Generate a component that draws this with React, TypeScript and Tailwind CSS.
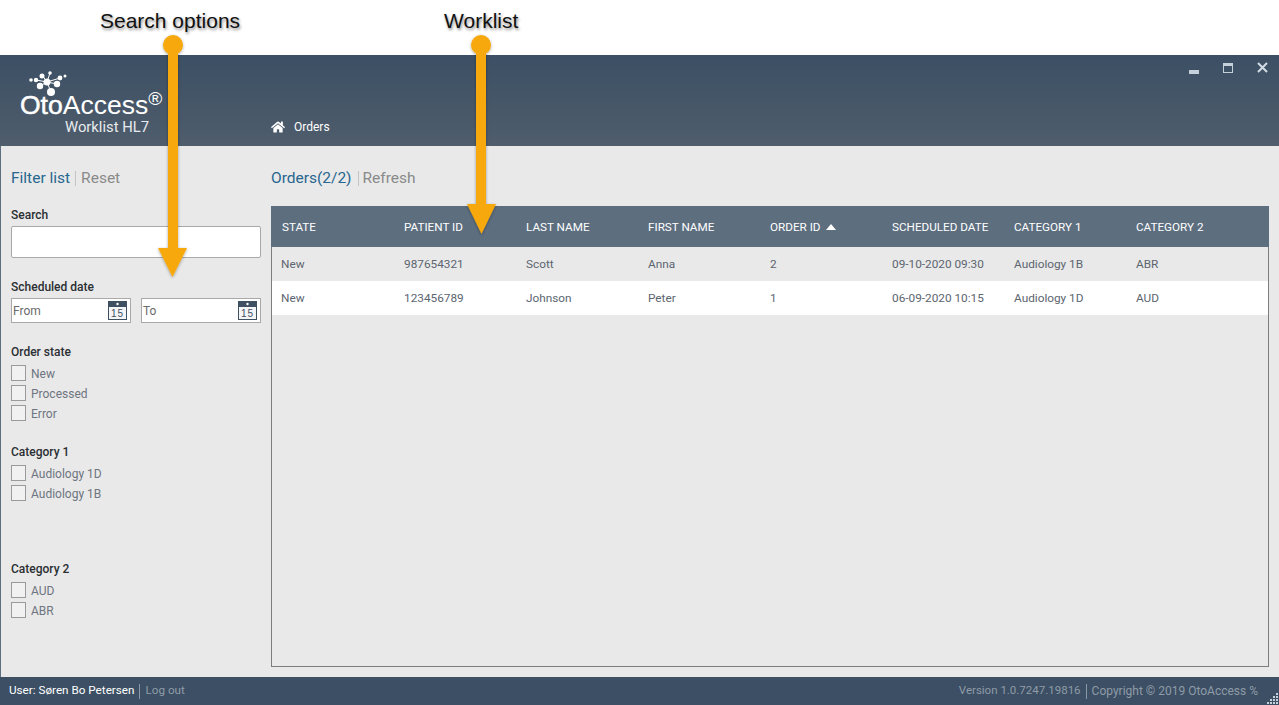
import { FaHome } from "react-icons/fa";

const font = { fontFamily: 'Roboto, "Noto Sans", sans-serif' };

const columns = ["STATE", "PATIENT ID", "LAST NAME", "FIRST NAME", "ORDER ID", "SCHEDULED DATE", "CATEGORY 1", "CATEGORY 2"];

const rows = [
  ["New", "987654321", "Scott", "Anna", "2", "09-10-2020 09:30", "Audiology 1B", "ABR"],
  ["New", "123456789", "Johnson", "Peter", "1", "06-09-2020 10:15", "Audiology 1D", "AUD"],
];

function Logo() {
  return (
    <svg width="40" height="26" viewBox="0 0 40 26" className="block">
      <g stroke="#fff" strokeWidth="1">
        <path d="M19 11 L8 9 M19 11 L14 4 M19 11 L22 2 M19 11 L32 7 M19 11 L12 15 M19 11 L23 21 M19 11 L29 13" />
      </g>
      <g fill="#fff">
        <circle cx="19" cy="11" r="3.5" />
        <circle cx="3" cy="9" r="1.8" />
        <circle cx="8" cy="9" r="2.2" />
        <circle cx="14" cy="5" r="2.5" />
        <circle cx="22" cy="2" r="1.8" />
        <circle cx="32" cy="7" r="2.4" />
        <circle cx="37" cy="5" r="1.5" />
        <circle cx="12" cy="15" r="3.2" />
        <circle cx="29" cy="13" r="3.2" />
        <circle cx="23" cy="21" r="4" />
      </g>
    </svg>
  );
}

function CalendarIcon() {
  return (
    <svg width="19" height="19" viewBox="0 0 19 19" className="block shrink-0">
      <rect x="0.5" y="0.5" width="18" height="18" fill="#f4f5f6" stroke="#3f5062" />
      <rect x="0" y="0" width="19" height="6" fill="#3f5062" />
      <circle cx="9.5" cy="3" r="1.2" fill="#fff" />
      <text x="9.5" y="16" textAnchor="middle" fontSize="10" fill="#3f5062" fontFamily="Liberation Sans, sans-serif" letterSpacing="1">
        15
      </text>
    </svg>
  );
}

function DateField({ label }: { label: string }) {
  return (
    <div className="flex h-[25px] w-[120px] items-center justify-between border border-[#a9a9a9] bg-white pl-[1px] pr-[3px] text-[12px] text-[#6b6b6b]">
      <span>{label}</span>
      <CalendarIcon />
    </div>
  );
}

function CheckRow({ label }: { label: string }) {
  return (
    <div className="flex h-[20px] items-center gap-[5px]">
      <span className="h-[16px] w-[15px] shrink-0 border border-[#9a9a9a] bg-[#f1f1f1]" />
      <span className="pt-[1px] text-[12px] text-[#6e7580]">{label}</span>
    </div>
  );
}

function CheckGroup({ title, items, className }: { title: string; items: string[]; className: string }) {
  return (
    <div className={className}>
      <div className="h-[18px] text-[12px] font-medium leading-[18px] text-[#2b2f33]">{title}</div>
      <div className="mt-[2px]">
        {items.map((item) => (
          <CheckRow key={item} label={item} />
        ))}
      </div>
    </div>
  );
}

function Sidebar() {
  return (
    <aside className="w-[271px] shrink-0 border-l border-[#5d6e7f] pl-[10px] pr-[10px] pt-[21px]">
      <div className="flex h-[22px] items-center text-[15.5px] leading-[22px]">
        <span className="text-[#27668f]">Filter list</span>
        <span className="mx-[5px] h-[15px] w-px bg-[#c4c4c4]" />
        <span className="text-[#8a8a8a]">Reset</span>
      </div>
      <div className="mt-[17px] h-[18px] text-[12px] font-medium leading-[18px] text-[#2b2f33]">Search</div>
      <div className="mt-[2px] h-[32px] rounded-[2px] border border-[#a9a9a9] bg-white" />
      <div className="mt-[20px] h-[18px] text-[12px] font-medium leading-[18px] text-[#2b2f33]">Scheduled date</div>
      <div className="mt-[2px] flex justify-between">
        <DateField label="From" />
        <DateField label="To" />
      </div>
      <CheckGroup className="mt-[20px]" title="Order state" items={["New", "Processed", "Error"]} />
      <CheckGroup className="mt-[20px]" title="Category 1" items={["Audiology 1D", "Audiology 1B"]} />
      <CheckGroup className="mt-[57px]" title="Category 2" items={["AUD", "ABR"]} />
    </aside>
  );
}

function OrdersTable() {
  return (
    <div className="flex h-[461px] flex-col border border-t-0 border-[#7d7d7d]">
      <div className="-mx-px grid h-[41px] shrink-0 grid-cols-[122px_122px_122px_122px_122px_122px_122px_1fr] items-center bg-[#5d6e7f] pl-[11px] pt-[2px] text-[11.7px] text-white">
        {columns.map((col) => (
          <div key={col} className="flex items-center gap-[5px] whitespace-nowrap">
            {col}
            {col === "ORDER ID" && <span className="h-0 w-0 border-x-[5px] border-b-[6px] border-x-transparent border-b-white" />}
          </div>
        ))}
      </div>
      {rows.map((row, i) => (
        <div
          key={row[1]}
          className={`grid h-[34px] shrink-0 grid-cols-[123px_122px_122px_122px_122px_122px_122px_1fr] items-center pl-[9px] pt-[1px] text-[11.8px] text-[#5c6570] ${i === 1 ? "bg-white" : ""}`}
        >
          {row.map((cell, j) => (
            <div key={j} className="whitespace-nowrap">
              {cell}
            </div>
          ))}
        </div>
      ))}
    </div>
  );
}

function Arrows() {
  return (
    <svg className="pointer-events-none absolute left-0 top-0" width="1279" height="300" viewBox="0 0 1279 300">
      <defs>
        <filter id="sh" x="-50%" y="-10%" width="200%" height="120%">
          <feDropShadow dx="0" dy="1" stdDeviation="1.5" floodColor="#000" floodOpacity="0.35" />
        </filter>
      </defs>
      <g fill="#f6a80b" filter="url(#sh)">
        <circle cx="173" cy="45" r="10" />
        <rect x="168" y="45" width="10" height="203" />
        <path d="M158 248 H187 L172.500 277 Z" />
      </g>
      <g fill="#f6a80b" filter="url(#sh)">
        <circle cx="481" cy="45" r="10" />
        <rect x="476" y="45" width="10" height="160" />
        <path d="M467 204 H496 L481.500 234 Z" />
      </g>
    </svg>
  );
}

export default function App() {
  return (
    <div className="relative flex h-[705px] w-[1279px] flex-col overflow-hidden bg-white" style={font}>
      <div className="flex h-[55px] shrink-0 text-[21px]" style={{ fontFamily: '"Liberation Sans", sans-serif' }}>
        <span className="ml-[100px] mt-[5px] h-fit text-[#111] [text-shadow:1px_2px_3px_rgba(0,0,0,0.45)]">Search options</span>
        <span className="ml-[204px] mt-[5px] h-fit text-[#111] [text-shadow:1px_2px_3px_rgba(0,0,0,0.45)]">Worklist</span>
      </div>

      <header className="relative h-[91px] shrink-0 bg-gradient-to-b from-[#3c4f64] to-[#4f5d6c] text-white">
        <div className="absolute left-[20px] top-[16px] w-[150px]">
          <div className="ml-[8px]">
            <Logo />
          </div>
          <div className="-mt-[4px] flex h-[24px] items-start whitespace-nowrap text-[26.5px] leading-[24px]" style={{ fontFamily: '"Liberation Sans", sans-serif' }}>
            <span className="[-webkit-text-stroke:0.5px_white]">Oto</span>
            <span>Access</span>
            <span className="-mt-[6px] text-[19px]">®</span>
          </div>
          <div className="ml-[45px] mt-[1px] whitespace-nowrap text-[14.8px] leading-[18px] text-[#e8ebee]">Worklist HL7</div>
        </div>
        <div className="flex h-full items-end pb-[10px] pl-[271px]">
          <FaHome className="mb-[2px] h-[14px] w-[14px] text-white" />
          <span className="ml-[9px] text-[12px] leading-[18px]">Orders</span>
        </div>
        <div className="absolute right-[11px] top-[6px] flex items-center text-[#c5d0da]">
          <span className="mt-[9px] h-[4px] w-[10px] bg-[#c5d0da]" />
          <span className="ml-[24px] h-[10px] w-[10px] border border-t-[3px] border-[#c5d0da]" />
          <svg className="ml-[24px]" width="11" height="11" viewBox="0 0 11 11" stroke="#d3dce4" strokeWidth="2">
            <path d="M1 1 L10 10 M10 1 L1 10" />
          </svg>
        </div>
      </header>

      <div className="flex min-h-0 flex-1 bg-[#e9e9e9]">
        <Sidebar />
        <main className="flex-1 pr-[10px] pt-[21px]">
          <div className="flex h-[22px] items-center text-[15.5px] leading-[22px]">
            <span className="text-[#27668f]">Orders(2/2)</span>
            <span className="ml-[6px] mr-[4px] h-[15px] w-px bg-[#c4c4c4]" />
            <span className="text-[#8a8a8a]">Refresh</span>
          </div>
          <div className="mt-[17px]">
            <OrdersTable />
          </div>
        </main>
      </div>

      <footer className="flex h-[28px] shrink-0 items-center bg-[#3c4f64] pl-[9px] pr-[21px] text-[11.7px]">
        <span className="text-white">User: Søren Bo Petersen</span>
        <span className="mx-[5px] h-[15px] w-px bg-[#8b98a5]" />
        <span className="text-[#8f9ba7]">Log out</span>
        <span className="ml-auto text-[11.5px] text-[#8f9ba7]">Version 1.0.7247.19816</span>
        <span className="mx-[5px] h-[15px] w-px bg-[#8b98a5]" />
        <span className="text-[12px] text-[#8f9ba7]">Copyright © 2019 OtoAccess %</span>
      </footer>
      <svg className="absolute bottom-[1px] right-[1px]" width="11" height="11" viewBox="0 0 11 11" fill="#c5d0da">
        <rect x="9" y="0" width="2" height="2" />
        <rect x="6" y="3" width="2" height="2" />
        <rect x="9" y="3" width="2" height="2" />
        <rect x="3" y="6" width="2" height="2" />
        <rect x="6" y="6" width="2" height="2" />
        <rect x="9" y="6" width="2" height="2" />
        <rect x="0" y="9" width="2" height="2" />
        <rect x="3" y="9" width="2" height="2" />
        <rect x="6" y="9" width="2" height="2" />
        <rect x="9" y="9" width="2" height="2" />
      </svg>

      <Arrows />
    </div>
  );
}
